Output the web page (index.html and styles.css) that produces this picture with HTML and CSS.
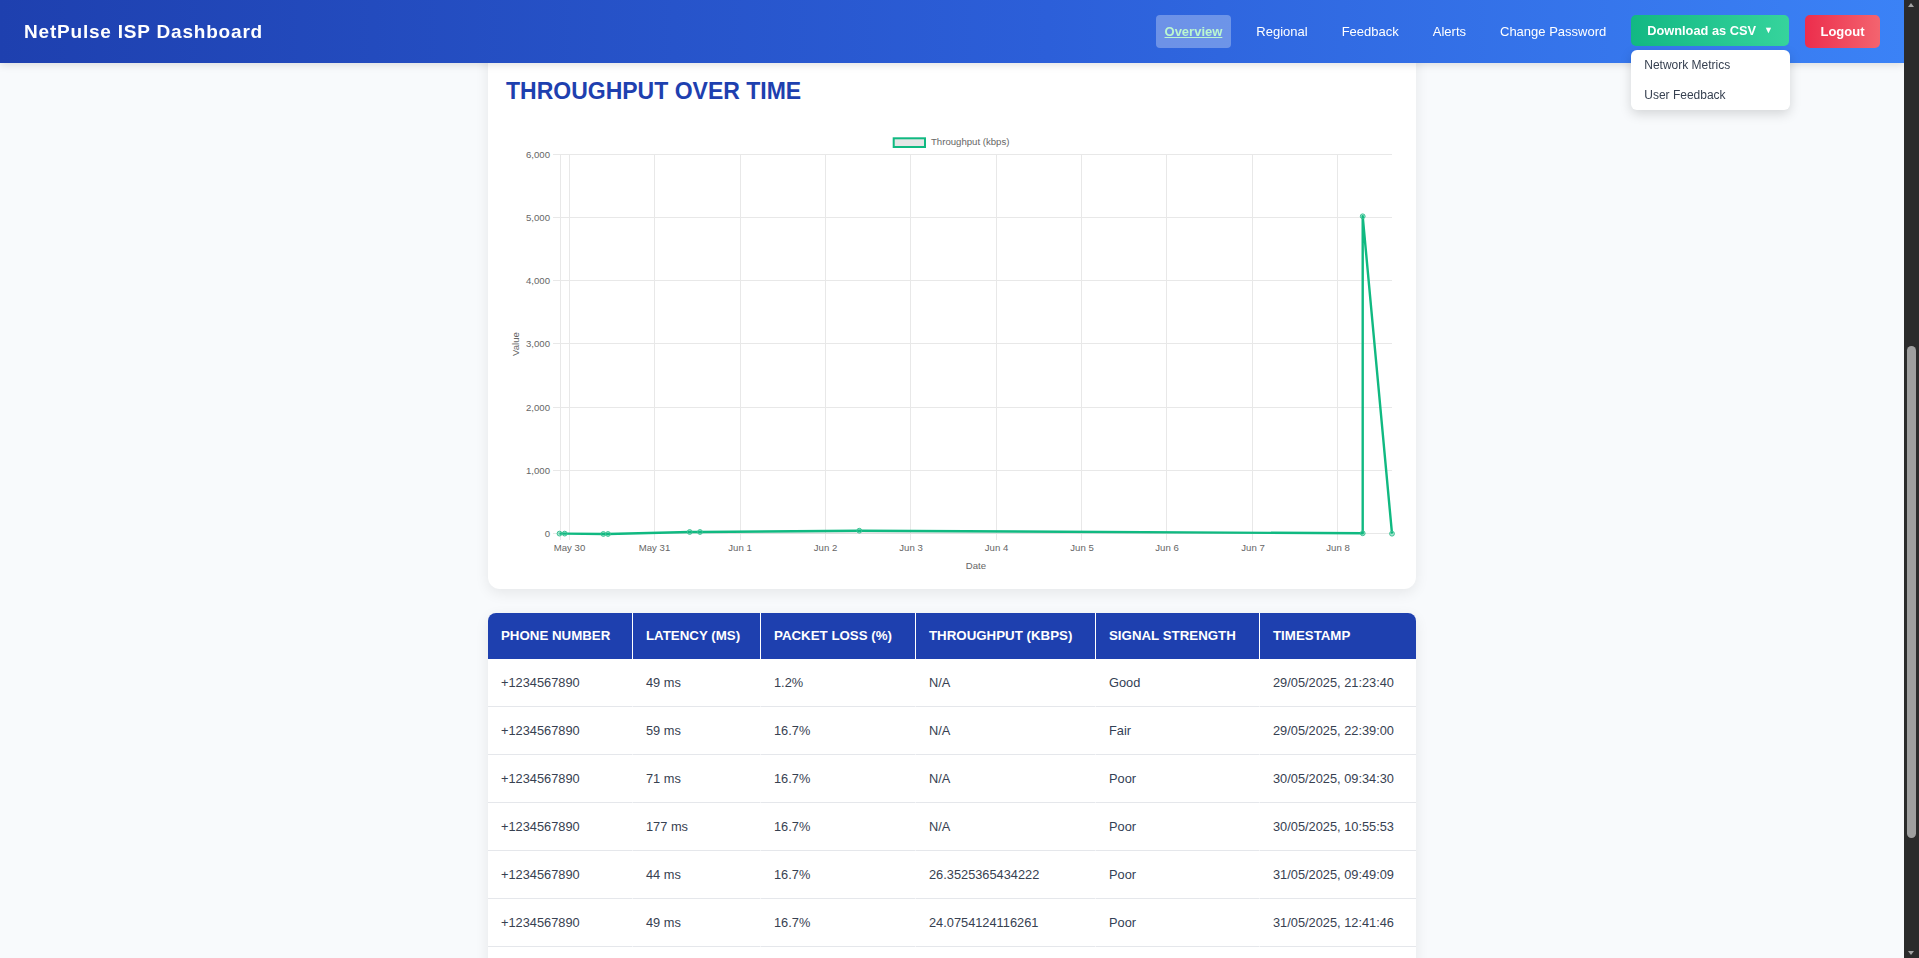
FILE: index.html
```html
<!DOCTYPE html>
<html lang="en">
<head>
<meta charset="utf-8">
<title>NetPulse ISP Dashboard</title>
<link rel="stylesheet" href="styles.css">
</head>
<body>
<header class="navbar">
  <div class="brand">NetPulse ISP Dashboard</div>
  <nav class="nav-links">
    <a class="nav-link active" href="#">Overview</a>
    <a class="nav-link" href="#">Regional</a>
    <a class="nav-link" href="#">Feedback</a>
    <a class="nav-link" href="#">Alerts</a>
    <a class="nav-link" href="#">Change Password</a>
    <div class="dropdown">
      <button class="btn btn-download">Download as CSV <span class="caret">&#9660;</span></button>
      <div class="dropdown-menu">
        <a class="dropdown-item" href="#">Network Metrics</a>
        <a class="dropdown-item" href="#">User Feedback</a>
      </div>
    </div>
    <button class="btn btn-logout">Logout</button>
  </nav>
</header>

<div class="scrollbar" aria-hidden="true">
  <span class="sb-arrow sb-up"></span>
  <span class="sb-thumb"></span>
  <span class="sb-arrow sb-down"></span>
</div>

<main class="main">
  <section class="card chart-card">
    <h2 class="card-title">THROUGHPUT OVER TIME</h2>
    <svg class="chart" width="896" height="479" viewBox="0 0 896 479" xmlns="http://www.w3.org/2000/svg">
      <!-- legend -->
      <rect x="389.7" y="28.3" width="31.3" height="8.7" fill="#e6e6e6" stroke="#10b981" stroke-width="2"/>
      <text class="lbl" x="427" y="35">Throughput (kbps)</text>

      <!-- horizontal grid -->
      <g stroke="#e8e8e8" stroke-width="1">
        <line x1="49" y1="44.5" x2="888" y2="44.5"/>
        <line x1="49" y1="107.5" x2="888" y2="107.5"/>
        <line x1="49" y1="170.5" x2="888" y2="170.5"/>
        <line x1="49" y1="233.5" x2="888" y2="233.5"/>
        <line x1="49" y1="297.5" x2="888" y2="297.5"/>
        <line x1="49" y1="360.5" x2="888" y2="360.5"/>
        <line x1="49" y1="423.5" x2="888" y2="423.5"/>
      </g>
      <!-- vertical grid -->
      <g stroke="#e8e8e8" stroke-width="1">
        <line x1="56.5" y1="44.5" x2="56.5" y2="430"/>
        <line x1="65.5" y1="44.5" x2="65.5" y2="430"/>
        <line x1="150.5" y1="44.5" x2="150.5" y2="430"/>
        <line x1="236.5" y1="44.5" x2="236.5" y2="430"/>
        <line x1="321.5" y1="44.5" x2="321.5" y2="430"/>
        <line x1="406.5" y1="44.5" x2="406.5" y2="430"/>
        <line x1="492.5" y1="44.5" x2="492.5" y2="430"/>
        <line x1="577.5" y1="44.5" x2="577.5" y2="430"/>
        <line x1="662.5" y1="44.5" x2="662.5" y2="430"/>
        <line x1="748.5" y1="44.5" x2="748.5" y2="430"/>
        <line x1="833.5" y1="44.5" x2="833.5" y2="430"/>
      </g>

      <!-- y tick labels -->
      <g class="lbl" text-anchor="end">
        <text x="46" y="47.8">6,000</text>
        <text x="46" y="110.8">5,000</text>
        <text x="46" y="173.8">4,000</text>
        <text x="46" y="236.8">3,000</text>
        <text x="46" y="300.8">2,000</text>
        <text x="46" y="363.8">1,000</text>
        <text x="46" y="426.8">0</text>
      </g>
      <!-- x tick labels -->
      <g class="lbl" text-anchor="middle">
        <text x="65.5" y="441">May 30</text>
        <text x="150.5" y="441">May 31</text>
        <text x="236" y="441">Jun 1</text>
        <text x="321.5" y="441">Jun 2</text>
        <text x="407" y="441">Jun 3</text>
        <text x="492.5" y="441">Jun 4</text>
        <text x="578" y="441">Jun 5</text>
        <text x="663" y="441">Jun 6</text>
        <text x="749" y="441">Jun 7</text>
        <text x="834" y="441">Jun 8</text>
      </g>
      <!-- axis titles -->
      <text class="lbl" x="472" y="458.5" text-anchor="middle">Date</text>
      <text class="lbl" transform="translate(15 234) rotate(-90)" text-anchor="middle">Value</text>

      <!-- data -->
      <polygon points="55.5,423.6 60.7,423.6 99.3,424 104,424 185.7,422 196,422 355.3,420.7 858.7,423.3 858.7,423.5 55.5,423.5" fill="rgba(0,0,0,0.08)"/>
      <polyline points="55.5,423.6 60.7,423.6 99.3,424 104,424 185.7,422 196,422 355.3,420.7 858.7,423.3 858.7,106.3 888,423.7" fill="none" stroke="#10b981" stroke-width="2.4" stroke-linejoin="round"/>
      <g fill="rgba(16,185,129,0.35)" stroke="#3cc394" stroke-width="1">
        <circle cx="55.5" cy="423.6" r="2.4"/>
        <circle cx="60.7" cy="423.6" r="2.4"/>
        <circle cx="99.3" cy="424" r="2.4"/>
        <circle cx="104" cy="424" r="2.4"/>
        <circle cx="185.7" cy="422" r="2.4"/>
        <circle cx="196" cy="422" r="2.4"/>
        <circle cx="355.3" cy="420.7" r="2.4"/>
        <circle cx="858.7" cy="423.3" r="2.4"/>
        <circle cx="858.7" cy="106.3" r="2.4"/>
        <circle cx="888" cy="423.7" r="2.4"/>
      </g>
    </svg>
  </section>

  <section class="table-card">
    <table class="data-table">
      <colgroup>
        <col class="c-phone">
        <col class="c-latency">
        <col class="c-loss">
        <col class="c-throughput">
        <col class="c-signal">
        <col class="c-time">
      </colgroup>
      <thead>
        <tr>
          <th>Phone Number</th>
          <th>Latency (ms)</th>
          <th>Packet Loss (%)</th>
          <th>Throughput (kbps)</th>
          <th>Signal Strength</th>
          <th>Timestamp</th>
        </tr>
      </thead>
      <tbody>
        <tr><td>+1234567890</td><td>49 ms</td><td>1.2%</td><td>N/A</td><td class="signal">Good</td><td>29/05/2025, 21:23:40</td></tr>
        <tr><td>+1234567890</td><td>59 ms</td><td>16.7%</td><td>N/A</td><td class="signal">Fair</td><td>29/05/2025, 22:39:00</td></tr>
        <tr><td>+1234567890</td><td>71 ms</td><td>16.7%</td><td>N/A</td><td class="signal">Poor</td><td>30/05/2025, 09:34:30</td></tr>
        <tr><td>+1234567890</td><td>177 ms</td><td>16.7%</td><td>N/A</td><td class="signal">Poor</td><td>30/05/2025, 10:55:53</td></tr>
        <tr><td>+1234567890</td><td>44 ms</td><td>16.7%</td><td>26.3525365434222</td><td class="signal">Poor</td><td>31/05/2025, 09:49:09</td></tr>
        <tr><td>+1234567890</td><td>49 ms</td><td>16.7%</td><td>24.0754124116261</td><td class="signal">Poor</td><td>31/05/2025, 12:41:46</td></tr>
      </tbody>
    </table>
  </section>
</main>
</body>
</html>
```

FILE: styles.css
```css
html,
body {
  overflow: hidden;
}

* {
  box-sizing: border-box;
}

body {
  margin: 0;
  padding-right: 15px;
  background: #f8fafc;
  font-family: "Liberation Sans", Arial, sans-serif;
  color: #374151;
}

/* ---------- Fake dark scrollbar (overlay at right edge) ---------- */
.scrollbar {
  position: fixed;
  top: 0;
  right: 0;
  width: 15px;
  height: 100vh;
  background: #2b2b2b;
  z-index: 20;
}

.sb-thumb {
  position: absolute;
  left: 3px;
  top: 346px;
  width: 9px;
  height: 492px;
  border-radius: 5px;
  background: #9f9f9f;
}

.sb-arrow {
  position: absolute;
  left: 4px;
  width: 0;
  height: 0;
  border-left: 3.5px solid transparent;
  border-right: 3.5px solid transparent;
}

.sb-up {
  top: 3px;
  border-bottom: 4px solid #a3a3a3;
}

.sb-down {
  bottom: 3px;
  border-top: 4px solid #a3a3a3;
}

/* ---------- Navbar ---------- */
.navbar {
  position: fixed;
  top: 0;
  left: 0;
  right: 15px;
  z-index: 10;
  height: 63px;
  padding: 0 24px;
  display: flex;
  align-items: center;
  background: linear-gradient(90deg, #1e40af 0%, #2c5fd9 55%, #3b82f6 100%);
  box-shadow: 0 2px 8px rgba(0, 0, 0, 0.12);
}

.brand {
  color: #ffffff;
  font-size: 19px;
  font-weight: 700;
  letter-spacing: 0.8px;
}

.nav-links {
  margin-left: auto;
  display: flex;
  align-items: center;
  gap: 16px;
}

.nav-link {
  display: block;
  color: #ffffff;
  text-decoration: none;
  font-size: 13px;
  line-height: 17px;
  padding: 8px 9px;
  border-radius: 4px;
}

.nav-link.active {
  background: rgba(255, 255, 255, 0.3);
  color: #bbf7d0;
  font-weight: 700;
  text-decoration: underline;
}

.btn {
  border: none;
  color: #ffffff;
  font-family: inherit;
  font-weight: 700;
  font-size: 13px;
  line-height: 17px;
  border-radius: 5px;
  cursor: pointer;
}

.btn-download {
  height: 31px;
  padding: 0 16px;
  margin-top: -2px;
  font-size: 12.8px;
  background: linear-gradient(90deg, #12b883, #36d49c);
  display: flex;
  align-items: center;
  gap: 8px;
}

.caret {
  font-size: 9px;
  line-height: 1;
}

.btn-logout {
  height: 33px;
  padding: 0 15.5px;
  background: linear-gradient(90deg, #ec2d4c, #f3646f);
}

.dropdown {
  position: relative;
}

.dropdown-menu {
  position: absolute;
  top: 33px;
  left: 0;
  width: 159px;
  background: #ffffff;
  border-radius: 6px;
  box-shadow: 0 4px 12px rgba(0, 0, 0, 0.15);
  overflow: hidden;
}

.dropdown-item {
  display: block;
  padding: 8px 13px;
  line-height: 14px;
  font-size: 12px;
  color: #374151;
  text-decoration: none;
}

/* ---------- Main ---------- */
.main {
  padding-top: 40px;
}

.card {
  width: 928px;
  margin: 0 auto;
  background: #ffffff;
  border-radius: 12px;
  box-shadow: 0 4px 14px rgba(0, 0, 0, 0.08);
}

.chart-card {
  padding: 38px 16px 0;
}

.card-title {
  margin: 0 0 6px 2px;
  font-size: 23px;
  line-height: 26px;
  font-weight: 700;
  color: #1e40af;
}

.chart {
  display: block;
}

.lbl {
  font-family: "Liberation Sans", Arial, sans-serif;
  font-size: 9.6px;
  fill: #666666;
}

/* ---------- Table ---------- */
.table-card {
  width: 928px;
  margin: 24px auto 0;
  padding-bottom: 24px;
  background: #ffffff;
  border-radius: 8px 8px 0 0;
  overflow: hidden;
  box-shadow: 0 4px 14px rgba(0, 0, 0, 0.08);
}

.data-table {
  width: 928px;
  table-layout: fixed;
  border-collapse: separate;
  border-spacing: 0;
}

.c-phone { width: 145px; }
.c-latency { width: 128px; }
.c-loss { width: 155px; }
.c-throughput { width: 180px; }
.c-signal { width: 164px; }
.c-time { width: 156px; }

.data-table th {
  background: #1e40af;
  color: #ffffff;
  text-align: left;
  text-transform: uppercase;
  font-size: 13.3px;
  font-weight: 700;
  line-height: 16px;
  padding: 15px 13px;
  border-right: 1px solid #ffffff;
  white-space: nowrap;
}

.data-table td {
  font-size: 12.8px;
  line-height: 15px;
  padding: 16px 13px;
  border-bottom: 1px solid #e5e7eb;
  border-right: 1px solid #ffffff;
  color: #374151;
  white-space: nowrap;
}

.data-table th:last-child,
.data-table td:last-child {
  border-right: none;
}

.data-table td.signal {
  color: #334155;
}
```
